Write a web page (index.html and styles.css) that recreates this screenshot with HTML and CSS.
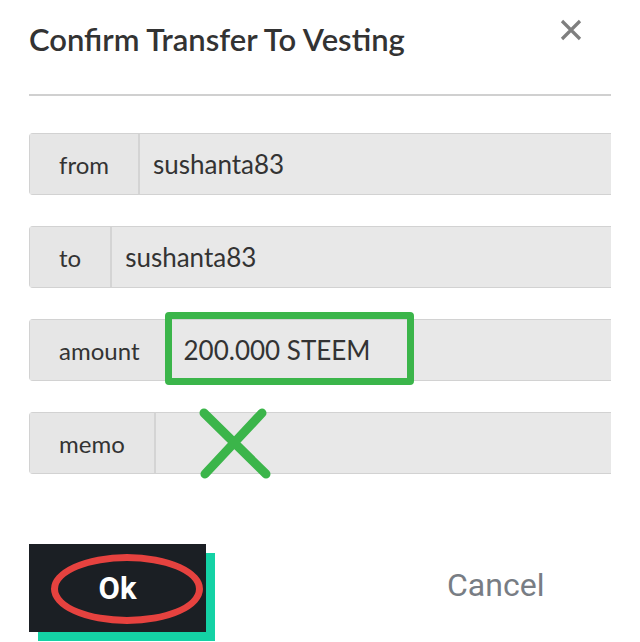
FILE: index.html
```html
<!DOCTYPE html>
<html>
<head>
<meta charset="utf-8">
<link rel="stylesheet" href="styles.css">
</head>
<body>
<div class="dialog">
  <div class="header">
    <h1 class="title">Confirm Transfer To Vesting</h1>
    <svg class="close" width="24" height="24" viewBox="0 0 24 24"><path d="M3 3L21 21M21 3L3 21" stroke="#7f7f7f" stroke-width="3.2" stroke-linecap="butt"/></svg>
  </div>
  <div class="divider"></div>
  <div class="form">
    <div class="row"><span class="label">from</span><span class="value">sushanta83</span></div>
    <div class="row"><span class="label">to</span><span class="value">sushanta83</span></div>
    <div class="row"><span class="label">amount</span><span class="value">200.000 STEEM</span><span class="mark-box"></span></div>
    <div class="row"><span class="label">memo</span><span class="value"></span>
      <svg class="mark-x" width="76" height="74" viewBox="0 0 76 74"><path d="M8 6L70 67M66 6L9 67" stroke="#3bb54a" stroke-width="9" stroke-linecap="round"/></svg>
    </div>
  </div>
  <div class="actions">
    <div class="ok-wrap">
      <button class="ok">Ok</button>
      <span class="mark-ellipse"></span>
    </div>
    <button class="cancel">Cancel</button>
  </div>
</div>
</body>
</html>
```
FILE: styles.css
```css
html, body {
  margin: 0;
  padding: 0;
  background: #ffffff;
}
body {
  width: 640px;
  height: 642px;
  overflow: hidden;
  font-family: "Lato", "Open Sans", sans-serif;
  color: #333333;
}
.dialog {
  padding: 0 29px;
}
.header {
  display: flex;
  justify-content: space-between;
  align-items: flex-start;
  height: 94px;
}
.title {
  margin: 20px 0 0 0;
  font-size: 31px;
  font-weight: 600;
  color: #333333;
  letter-spacing: 0;
}
.close {
  margin-top: 18px;
  margin-right: 28px;
}
.divider {
  height: 2px;
  background: #d0d0d0;
}
.form {
  display: flex;
  flex-direction: column;
  gap: 31px;
  padding-top: 37px;
}
.row {
  position: relative;
  display: flex;
  height: 62px;
  box-sizing: border-box;
  border: 1px solid #d2d2d2;
  border-right: none;
  border-radius: 4px 0 0 4px;
  background: #e8e8e8;
}
.label {
  display: flex;
  align-items: center;
  padding: 0 29px 0 29px;
  font-size: 24px;
  color: #333333;
  border-right: 2px solid #d4d4d4;
  background: #e6e6e6;
}
.value {
  display: flex;
  align-items: center;
  padding-left: 13px;
  font-size: 26px;
  color: #333333;
}
.mark-box {
  position: absolute;
  left: 135px;
  top: -8px;
  width: 249px;
  height: 73px;
  box-sizing: border-box;
  border: 7px solid #3bb54a;
  border-radius: 4px;
}
.mark-x {
  position: absolute;
  left: 166px;
  top: -6px;
}
.actions {
  display: flex;
  align-items: center;
  padding-top: 70px;
}
.ok-wrap {
  position: relative;
  width: 177px;
  height: 88px;
}
.ok {
  width: 177px;
  height: 88px;
  border: none;
  background: #1b1f24;
  color: #ffffff;
  font-family: "Roboto", sans-serif;
  font-weight: 700;
  font-size: 31px;
  box-shadow: 9px 9px 0 #14d2a5;
  padding: 0;
}
.mark-ellipse {
  position: absolute;
  left: 22px;
  top: 10px;
  width: 152px;
  height: 70px;
  box-sizing: border-box;
  border: 7px solid #e6423f;
  border-radius: 50%;
}
.cancel {
  margin-left: 241px;
  margin-bottom: 6px;
  border: none;
  background: none;
  padding: 0;
  font-family: "Roboto", sans-serif;
  font-size: 32px;
  color: #787d84;
}
```
